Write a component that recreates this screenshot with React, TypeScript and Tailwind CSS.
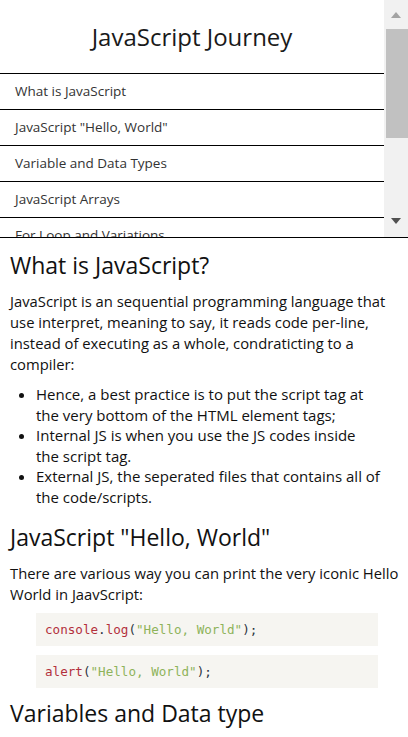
import * as React from "react";

const topics = [
  "What is JavaScript",
  'JavaScript "Hello, World"',
  "Variable and Data Types",
  "JavaScript Arrays",
  "For Loop and Variations",
];

const Scrollbar = () => (
  <div className="w-[24px] shrink-0 bg-[#f1f1f1] flex flex-col items-end">
    <div className="h-[29px] w-full flex items-center justify-center">
      <svg width="10" height="6" viewBox="0 0 10 6">
        <path d="M5 0 L10 6 L0 6 Z" fill="#a3a3a3" />
      </svg>
    </div>
    <div className="w-[22px] h-[109px] bg-[#c1c1c1]" />
    <div className="flex-1" />
    <div className="h-[32px] w-full flex items-center justify-center">
      <svg width="10" height="6" viewBox="0 0 10 6">
        <path d="M0 0 L10 0 L5 6 Z" fill="#505050" />
      </svg>
    </div>
  </div>
);

const Code = ({ children }: { children: React.ReactNode }) => (
  <pre className="ml-[26px] mr-[24px] bg-[#f6f5f1] px-[9px] py-[8px] text-[12.6px] leading-[17px] font-['DejaVu_Sans_Mono',monospace]">
    {children}
  </pre>
);

export default function App() {
  return (
    <div className="h-[737px] overflow-hidden bg-white flex flex-col font-['Open_Sans',sans-serif] text-[#111]">
      <nav className="h-[238px] shrink-0 flex border-b border-black">
        <div className="flex-1 overflow-hidden">
          <h1 className="h-[73px] flex items-center justify-center text-[24px] text-[#1a1a1a]">
            JavaScript Journey
          </h1>
          <ul>
            {topics.map((t) => (
              <li
                key={t}
                className="h-[36px] border-t border-black px-[15px] flex items-center text-[13.5px] text-[#333]"
              >
                {t}
              </li>
            ))}
          </ul>
        </div>
        <Scrollbar />
      </nav>
      <main className="pl-[10px] pr-[6px] pt-[12px]">
        <h2 className="text-[23px] leading-[30px] font-medium">What is JavaScript?</h2>
        <p className="mt-[11px] text-[14.8px] leading-[21px]">
          JavaScript is an sequential programming language that use interpret,
          meaning to say, it reads code per-line, instead of executing as a
          whole, condraticting to a compiler:
        </p>
        <ul className="list-disc pl-[26px] pr-[15px] mt-[9px] text-[15px] leading-[20.5px]">
          <li>
            Hence, a best practice is to put the script tag at the very bottom
            of the HTML element tags;
          </li>
          <li>
            Internal JS is when you use the JS codes inside
            <br />
            the script tag.
          </li>
          <li>
            External JS, the seperated files that contains all of the
            code/scripts.
          </li>
        </ul>
        <h2 className="mt-[15px] text-[23px] leading-[30px] font-medium">
          JavaScript "Hello, World"
        </h2>
        <p className="mt-[11px] text-[14.8px] leading-[21px]">
          There are various way you can print the very iconic Hello World in
          JaavScript:
        </p>
        <div className="mt-[8px] flex flex-col gap-[9px]">
          <Code>
            <span className="text-[#b3303c]">console</span>
            <span className="text-[#2b3340]">.</span>
            <span className="text-[#b3303c]">log</span>
            <span className="text-[#2b3340]">(</span>
            <span className="text-[#8eb35a]">"Hello, World"</span>
            <span className="text-[#2b3340]">);</span>
          </Code>
          <Code>
            <span className="text-[#b3303c]">alert</span>
            <span className="text-[#2b3340]">(</span>
            <span className="text-[#8eb35a]">"Hello, World"</span>
            <span className="text-[#2b3340]">);</span>
          </Code>
        </div>
        <h2 className="mt-[10px] text-[23px] leading-[30px] font-medium">
          Variables and Data type
        </h2>
      </main>
    </div>
  );
}
